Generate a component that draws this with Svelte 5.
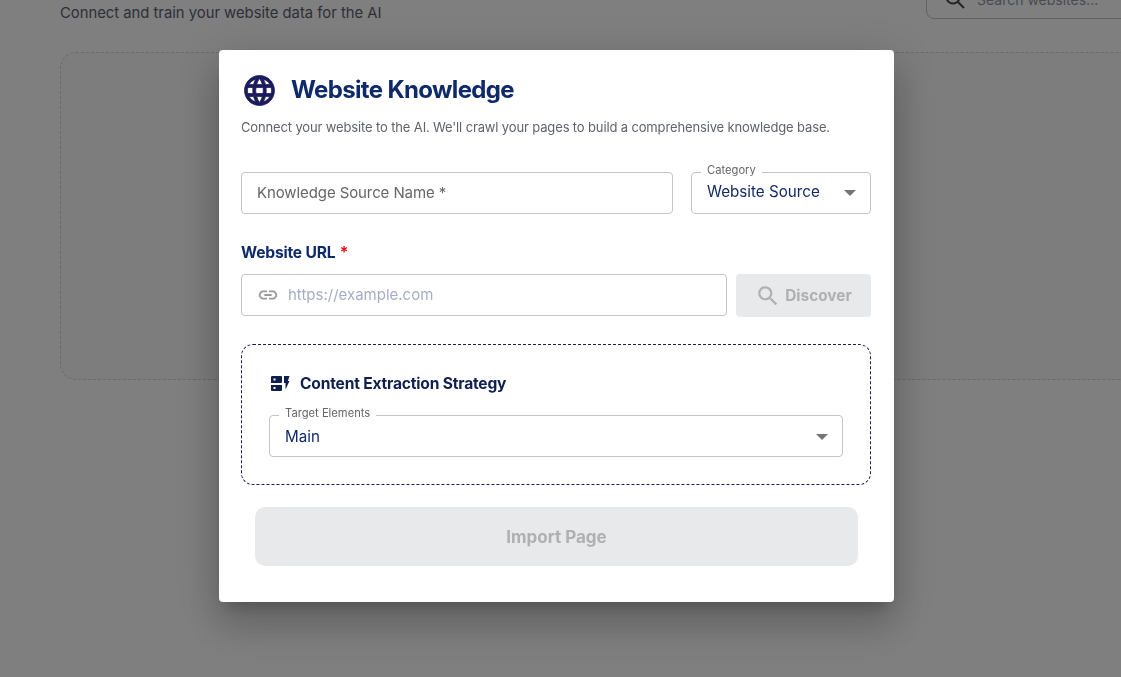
<script>
  const sample = 'Connect your website to the AI. We\'ll crawl your pages to build a comprehensive knowledge base.';
</script>

<div class="page">
  <header class="page-head">
    <p class="page-sub">Connect and train your website data for the AI</p>
    <div class="page-search">
      <svg viewBox="0 0 24 24" width="24" height="24" class="page-search-icon" fill="none" stroke="currentColor" stroke-width="2"><circle cx="10" cy="10" r="6.5"/><path d="M15 15l6 6"/></svg>
      <span>Search websites...</span>
    </div>
  </header>
  <div class="page-empty"></div>
</div>

<div class="overlay">
  <div class="modal">
    <div class="title-row">
      <svg class="globe" viewBox="1 1 22 22" width="33" height="33" fill="#1a1a5c" aria-hidden="true">
        <path d="M12 2C6.48 2 2 6.48 2 12s4.48 10 10 10 10-4.48 10-10S17.52 2 12 2zm6.93 6h-2.95c-.32-1.25-.78-2.45-1.38-3.56 1.84.63 3.37 1.91 4.33 3.56zM12 4.04c.83 1.2 1.48 2.53 1.91 3.96h-3.82c.43-1.43 1.08-2.76 1.91-3.96zM4.26 14C4.1 13.36 4 12.69 4 12s.1-1.36.26-2h3.38c-.08.66-.14 1.32-.14 2s.06 1.34.14 2H4.26zm.82 2h2.95c.32 1.25.78 2.45 1.38 3.56-1.84-.63-3.37-1.9-4.33-3.56zm2.95-8H5.08c.96-1.66 2.49-2.93 4.33-3.56C8.81 5.55 8.35 6.75 8.03 8zM12 19.96c-.83-1.2-1.48-2.53-1.91-3.96h3.82c-.43 1.43-1.08 2.76-1.91 3.96zM14.34 14H9.66c-.09-.66-.16-1.32-.16-2s.07-1.35.16-2h4.68c.09.65.16 1.32.16 2s-.07 1.34-.16 2zm.25 5.56c.6-1.11 1.06-2.31 1.38-3.56h2.95c-.96 1.65-2.49 2.93-4.33 3.56zM16.36 14c.08-.66.14-1.32.14-2s-.06-1.34-.14-2h3.38c.16.64.26 1.31.26 2s-.1 1.36-.26 2h-3.38z" stroke="#1a1a5c" stroke-width=".5"/>
      </svg>
      <h2>Website Knowledge</h2>
    </div>
    <p class="lead">{sample}</p>

    <div class="row-source">
      <div class="field name-field"><span class="ph-name">Knowledge Source Name *</span></div>
      <div class="field category-field">
        <span class="legend">Category</span>
        <span class="value">Website Source</span>
        <span class="caret"></span>
      </div>
    </div>

    <div class="url-label">Website URL <span class="req">*</span></div>
    <div class="row-url">
      <div class="field url-field">
        <svg viewBox="0 0 24 24" width="22" height="22" fill="#9a9a9a" aria-hidden="true"><path d="M3.9 12c0-1.71 1.39-3.1 3.1-3.1h4V7H7c-2.76 0-5 2.24-5 5s2.24 5 5 5h4v-1.9H7c-1.71 0-3.1-1.39-3.1-3.1zM8 13h8v-2H8v2zm9-6h-4v1.9h4c1.71 0 3.1 1.39 3.1 3.1s-1.39 3.1-3.1 3.1h-4V17h4c2.76 0 5-2.24 5-5s-2.24-5-5-5z"/></svg>
        <span class="url-ph">https://example.com</span>
      </div>
      <div class="discover">
        <svg viewBox="0 0 24 24" width="26" height="26" fill="#aeb0b2" aria-hidden="true"><path d="M15.5 14h-.79l-.28-.27C15.41 12.59 16 11.11 16 9.5 16 5.91 13.09 3 9.5 3S3 5.91 3 9.5 5.91 16 9.5 16c1.61 0 3.09-.59 4.23-1.57l.27.28v.79l5 4.99L20.49 19l-4.99-5zm-6 0C7.01 14 5 11.99 5 9.5S7.01 5 9.5 5 14 7.01 14 9.5 11.99 14 9.5 14z"/></svg>
        <span>Discover</span>
      </div>
    </div>

    <section class="strategy">
      <div class="strategy-head">
        <svg viewBox="0 0 20 18" width="20" height="18" fill="#0f2050" aria-hidden="true">
          <path fill-rule="evenodd" d="M2 1h9a1 1 0 0 1 1 1v5a1 1 0 0 1-1 1H1V2a1 1 0 0 1 1-1zm1.5 2.5v2h2v-2h-2zM1 10h11v5a1 1 0 0 1-1 1H2a1 1 0 0 1-1-1v-5zm2.5 2v2h2v-2h-2z"/>
          <path d="M14 1h5.5l-1.6 5H19.5l-4 8.5V8H14z"/>
        </svg>
        <h3>Content Extraction Strategy</h3>
      </div>
      <div class="field target-field">
        <span class="legend">Target Elements</span>
        <span class="value">Main</span>
        <span class="caret"></span>
      </div>
    </section>

    <div class="import">Import Page</div>
  </div>
</div>

<style>
  :global(html, body) {
    margin: 0;
    height: 100%;
    overflow: hidden;
  }
  :global(body) {
    background: #fff;
    font-family: Inter, "Noto Sans", sans-serif;
  }

  .page {
    height: 692px;
    margin-top: -15px;
    padding: 0 0 0 60px;
    box-sizing: border-box;
    overflow: hidden;
  }
  .page-head {
    display: flex;
    justify-content: space-between;
    align-items: flex-end;
    height: 34px;
  }
  .page-sub {
    margin: 0 0 -5px;
    font-size: 14.8px;
    line-height: 22px;
    color: #5a6070;
  }
  .page-search {
    display: flex;
    align-items: center;
    gap: 10px;
    width: 230px;
    height: 40px;
    margin-right: -35px;
    padding-left: 16px;
    box-sizing: border-box;
    border: 1px solid #c4c4c4;
    border-radius: 8px;
    color: #8f96ab;
    font-size: 14px;
    flex: none;
  }
  .page-search-icon {
    color: #444;
    flex: none;
  }
  .page-empty {
    margin-top: 33px;
    margin-right: -40px;
    height: 326px;
    border: 1px dashed #d4d4d4;
    border-radius: 16px;
    background: #fbfbfb;
  }

  .overlay {
    position: fixed;
    inset: 0;
    background: rgba(0, 0, 0, 0.5);
    padding: 50px 0 0 219px;
    box-sizing: border-box;
  }
  .modal {
    width: 675px;
    height: 552px;
    box-sizing: border-box;
    padding: 24px 23px 0 22px;
    background: #fff;
    border-radius: 4px;
    box-shadow: 0 11px 15px -7px rgba(0,0,0,.2), 0 24px 38px 3px rgba(0,0,0,.14), 0 9px 46px 8px rgba(0,0,0,.12);
  }

  .title-row {
    display: flex;
    align-items: center;
    gap: 15px;
    height: 32px;
    padding-left: 2px;
  }
  .globe {
    flex: none;
  }
  h2 {
    margin: 0;
    font-size: 24px;
    line-height: 32px;
    font-weight: 700;
    letter-spacing: -0.65px;
    color: #0f2a6b;
  }
  .lead {
    margin: 11px 0 0;
    font-size: 13px;
    line-height: 20px;
    color: #5f636b;
    letter-spacing: -0.14px;
  }

  .row-source {
    display: flex;
    gap: 18px;
    margin-top: 35px;
  }
  .field {
    position: relative;
    box-sizing: border-box;
    height: 42px;
    border: 1px solid #c4c4c4;
    border-radius: 4px;
    display: flex;
    align-items: center;
  }
  .name-field {
    width: 432px;
    padding-left: 15px;
  }
  .ph-name {
    font-size: 15px;
    color: #666;
    letter-spacing: -0.1px;
    position: relative;
    top: -1px;
  }
  .category-field {
    width: 180px;
    padding-left: 15px;
  }
  .legend {
    position: absolute;
    left: 9px;
    top: -11px;
    padding: 0 6px;
    background: #fff;
    font-size: 11.2px;
    line-height: 16px;
    color: #666;
  }
  .value {
    font-size: 15.2px;
    color: #0f2a6b;
    position: relative;
    top: -2px;
  }
  .caret {
    position: absolute;
    right: 14px;
    top: 17px;
    width: 0;
    height: 0;
    border-left: 6px solid transparent;
    border-right: 6px solid transparent;
    border-top: 6px solid #757575;
  }

  .url-label {
    margin-top: 28px;
    font-size: 15.6px;
    line-height: 20px;
    font-weight: 700;
    letter-spacing: -0.2px;
    color: #0f2a6b;
    position: relative;
    top: 1px;
  }
  .req {
    color: #e01010;
    margin-left: 1px;
  }
  .row-url {
    display: flex;
    gap: 9px;
    margin-top: 12px;
  }
  .url-field {
    width: 486px;
    padding-left: 15px;
    gap: 9px;
  }
  .url-ph {
    font-size: 15px;
    color: #a5aec6;
    position: relative;
    top: -1px;
  }
  .discover {
    flex: none;
    width: 135px;
    height: 43px;
    box-sizing: border-box;
    background: #e8e9eb;
    border-radius: 4px;
    display: flex;
    align-items: center;
    justify-content: center;
    gap: 4px;
    color: #aeb0b2;
    font-weight: 700;
    font-size: 15.4px;
  }

  .strategy {
    margin-top: 27px;
    box-sizing: border-box;
    width: 630px;
    height: 141px;
    border: 1px dashed #1a1a5c;
    border-radius: 12px;
    padding: 29px 28px 0 27px;
  }
  .strategy-head {
    display: flex;
    align-items: center;
    gap: 10px;
    height: 20px;
    padding-left: 1px;
  }
  h3 {
    margin: 0;
    font-size: 15.6px;
    line-height: 20px;
    font-weight: 700;
    letter-spacing: -0.2px;
    color: #0f2050;
  }
  .target-field {
    margin-top: 21px;
    padding-left: 15px;
    width: 574px;
  }
  .target-field .value {
    top: 0;
  }
  .target-field .caret {
    top: 18px;
  }

  .import {
    margin: 22px 0 0 14px;
    width: 603px;
    height: 59px;
    background: #e8e9eb;
    border-radius: 10px;
    display: flex;
    align-items: center;
    justify-content: center;
    color: #aeb0b2;
    font-weight: 700;
    font-size: 17px;
  }
</style>
